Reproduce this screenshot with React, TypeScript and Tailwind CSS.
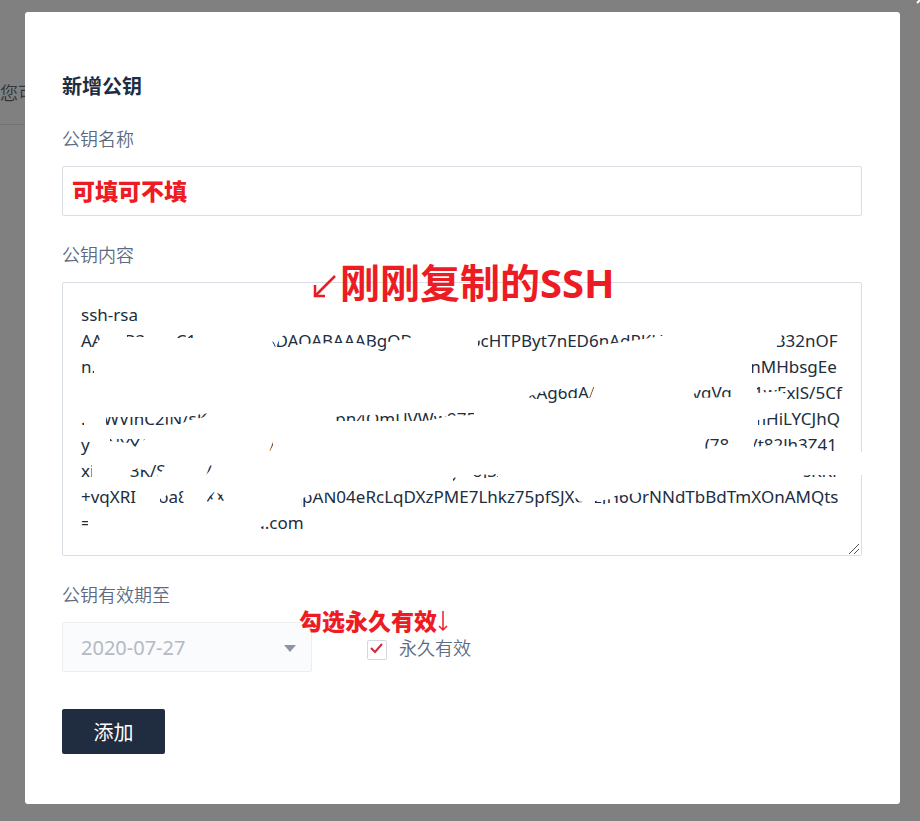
import { useState } from "react";

const gap = (n: number) => " ".repeat(n);

const keyText = [
  "ssh-rsa",
  "AAAAB3NzaC1yc2EAAAADAQABAAABgQD" + gap(13) + "ocHTPByt7nED6nAdPKH" + gap(25) + "B32nOF",
  "n." + gap(148) + "nMHbsgEe",
  gap(101) + "xAg6dA/" + gap(22) + "vqVq" + gap(5) + "1wExlS/5Cf",
  "." + gap(4) + "WVlnC2JN/sK" + gap(29) + "pn4QmUVWw975" + gap(62) + "mHiLYCJhQ",
  "y" + gap(4) + "NYY/" + gap(28) + "/" + gap(97) + "(78" + gap(5) + "/t82lh3Z41",
  "xi" + gap(8) + "3K/S" + gap(9) + "/" + gap(54) + "y" + gap(3) + "oJSI" + gap(68) + "sKKii",
  "+vqXRI" + gap(5) + "oa8" + gap(4) + "XX" + gap(15) + "qpAN04eRcLqDXzPME7Lhkz75pfSJXC" + gap(2) + "zJH6OrNNdTbBdTmXOnAMQts",
  "=" + gap(37) + "u.com",
].join("\n");

// Parts of the key left readable between the eraser strokes.
const windows = [
  "79,330 98,330 101,338 97,343 92,352 79,352",
  "127,330 144,330 144,337 127,337",
  "177,330 195,330 193,338 177,338",
  "272,341 277,345 280,338 286,334 300,330 418,330 413,337 400,340 388,342 385,353 370,346 357,343 335,343 300,344 290,347 275,347",
  "478,341 484,338 492,334 676,330 672,334 650,338 630,341 615,343 600,345 590,352 478,353",
  "781,330 850,330 850,354 776,354 777,346 782,340",
  "79,356 94,356 94,380 79,380",
  "752,356 850,356 850,380 752,380",
  "527,397 545,391 552,389 575,389 583,385 595,385 590,398 568,398 560,405 540,405 536,399",
  "692,396 700,388 710,385 732,385 731,397 692,398",
  "757,384 850,384 850,406 788,406 786,396 782,391 757,393",
  "79,420 84,420 84,428 79,428",
  "106,417 180,417 210,413 210,416 190,420 180,424 160,425 106,425",
  "328,419 340,416 400,414 420,410 474,409 474,415 447,416 436,419 425,421 328,421",
  "758,420 770,418 782,410 850,410 850,430 758,426",
  "79,434 92,434 90,447 86,460 79,460",
  "110,437 147,437 143,441 136,447 129,443 110,441",
  "268,441 273,437 273,445 270,451 268,451",
  "705,437 730,437 728,445 718,445 705,449",
  "754,438 850,436 850,453 815,449 800,447 770,445 754,447",
  "79,462 92,462 92,482 79,482",
  "127,470 134,468 149,471 154,464 166,464 163,470 155,478 127,478",
  "204,472 211,465 213,467 206,475",
  "453,478 458,477 456,482 453,482",
  "473,475 498,474 498,478 473,478",
  "803,475 837,475 837,477 803,477",
  "79,486 136,486 136,510 79,510",
  "160,499 166,496 168,489 184,489 182,496 184,504 160,504",
  "206,500 214,492 226,496 231,500 220,501 216,497 208,502",
  "301,499 312,494 335,492 345,487 574,486 574,497 583,502 573,503 572,510 301,510",
  "595,501 612,499 615,496 630,494 650,491 664,487 725,489 733,487 850,487 850,510 680,505 595,504",
  "79,514 88,514 88,532 79,532",
  "261,527 268,524 274,519 280,514 310,514 310,532 261,530",
];

const coverPath =
  "M68 330H856V534H68Z " + windows.map((points) => "M" + points.replaceAll(" ", "L") + "Z").join(" ");

const labelClass = "block text-[18px] leading-[26px] font-[350] text-[#5d6b82]";

export default function App() {
  const [name, setName] = useState("");
  const [content, setContent] = useState(keyText);
  const [forever, setForever] = useState(true);

  return (
    <div className="relative min-h-screen overflow-hidden bg-[#808080] font-['Noto_Sans','Noto_Sans_CJK_SC',sans-serif]">
      <div className="absolute top-0 left-0 h-[125px] w-1/2 border-b border-[#747474] pt-20">
        <p className="text-[18px] leading-[26px] font-[350] text-[#2f3641]">您可</p>
      </div>
      <button type="button" aria-label="关闭" className="absolute top-0 right-0 h-1 w-1">
        <svg viewBox="0 0 4 4" className="block h-1 w-1">
          <path d="M1 3L5 -1" stroke="#fff" strokeWidth="2" />
        </svg>
      </button>

      <div className="relative pt-3 pr-5 pb-[17px] pl-[25px]">
        <form
          role="dialog"
          aria-labelledby="dialog-title"
          onSubmit={(event) => event.preventDefault()}
          className="rounded-[3px] bg-white pt-[60px] pr-[38px] pb-[50px] pl-[37px]"
        >
          <h2 id="dialog-title" className="text-[20px] leading-[30px] font-bold text-[#202d40]">
            新增公钥
          </h2>

          <div className="mt-6">
            <label htmlFor="key-name" className={labelClass}>
              公钥名称
            </label>
            <div className="relative mt-[14px]">
              <input
                id="key-name"
                value={name}
                onChange={(event) => setName(event.target.value)}
                className="block h-[50px] w-full rounded-[2px] border border-[#dadfe6] bg-white px-[18px] text-[17px] text-[#202d40] outline-none"
              />
              <span className="pointer-events-none absolute top-[10px] left-[10px] text-[23px] leading-[30px] font-black text-[#ed1c24]">
                可填可不填
              </span>
            </div>
          </div>

          <div className="mt-[26px]">
            <label htmlFor="key-content" className={labelClass}>
              公钥内容
            </label>
            <div className="relative mt-[14px]">
              <textarea
                id="key-content"
                value={content}
                onChange={(event) => setContent(event.target.value)}
                spellCheck={false}
                className="block h-[274px] w-full resize-y overflow-hidden rounded-[2px] border border-[#dadfe6] bg-white px-[18px] pt-[19px] text-[17px] leading-[26px] whitespace-pre text-[#202d40] outline-none"
              />
              <svg viewBox="0 0 802 274" className="pointer-events-none absolute top-0 left-0 h-[274px] w-[802px]">
                <g fill="#fff" transform="translate(-62 -282)">
                  <path fillRule="evenodd" d={coverPath} />
                  <path d="M856 452H864V475H856Z" />
                </g>
              </svg>
              <svg viewBox="0 0 12 12" className="pointer-events-none absolute right-px bottom-px h-3 w-3 bg-white" stroke="#555">
                <path d="M0 11L10 1M5 11L10 6" />
              </svg>
              <div className="pointer-events-none absolute -top-7 left-[250px] flex items-center whitespace-nowrap text-[#ed1c24]">
                <svg viewBox="0 0 28 58" className="h-[58px] w-7" fill="none" stroke="currentColor" strokeWidth="2.5">
                  <path d="M23 22L4 41" />
                  <path d="M3 31V42H13" />
                </svg>
                <span className="text-[40px] leading-[58px] font-bold">刚刚复制的SSH</span>
              </div>
            </div>
          </div>

          <div className="mt-[26px]">
            <label htmlFor="key-expiry" className={labelClass}>
              公钥有效期至
            </label>
            <div className="relative mt-[14px] flex items-center">
              <div className="relative w-[250px]">
                <select
                  id="key-expiry"
                  disabled={forever}
                  className="block h-[50px] w-full appearance-none rounded-[2px] border border-[#eceef2] bg-[#fafbfd] px-[18px] pt-[2px] text-[20px] text-[#b4b9c2] opacity-100"
                >
                  <option>2020-07-27</option>
                </select>
                <svg viewBox="0 0 12 7" className="pointer-events-none absolute top-[23px] right-4 h-[7px] w-3" fill="#8e95a2">
                  <path d="M0 0H12L6 7Z" />
                </svg>
              </div>
              <label className="mt-[2px] ml-[55px] flex items-center gap-3 text-[18px] leading-[26px] font-[350] text-[#5d6b82]">
                <span className="relative mt-1 block h-5 w-5">
                  <input
                    type="checkbox"
                    checked={forever}
                    onChange={(event) => setForever(event.target.checked)}
                    className="peer block h-5 w-5 appearance-none rounded-[2px] border border-[#d5d8e2] bg-white"
                  />
                  <svg
                    viewBox="0 0 20 20"
                    className="pointer-events-none absolute inset-0 hidden h-5 w-5 peer-checked:block"
                    fill="none"
                    stroke="#d9263f"
                    strokeWidth="2"
                  >
                    <path d="M4 8L8 12L15 4" />
                  </svg>
                </span>
                永久有效
              </label>
              <span className="pointer-events-none absolute -top-4 left-[237px] flex items-center text-[23px] leading-[30px] font-black whitespace-nowrap text-[#ed1c24]">
                勾选永久有效
                <svg viewBox="0 0 12 30" className="h-[30px] w-3" fill="none" stroke="currentColor" strokeWidth="1.5">
                  <path d="M6 5V24M2 20L6 24L10 20" />
                </svg>
              </span>
            </div>
          </div>

          <button
            type="submit"
            className="mt-[37px] block h-[45px] w-[103px] rounded-[2px] bg-[#202d40] pt-[3px] text-[20px] text-white"
          >
            添加
          </button>
        </form>
      </div>
    </div>
  );
}
